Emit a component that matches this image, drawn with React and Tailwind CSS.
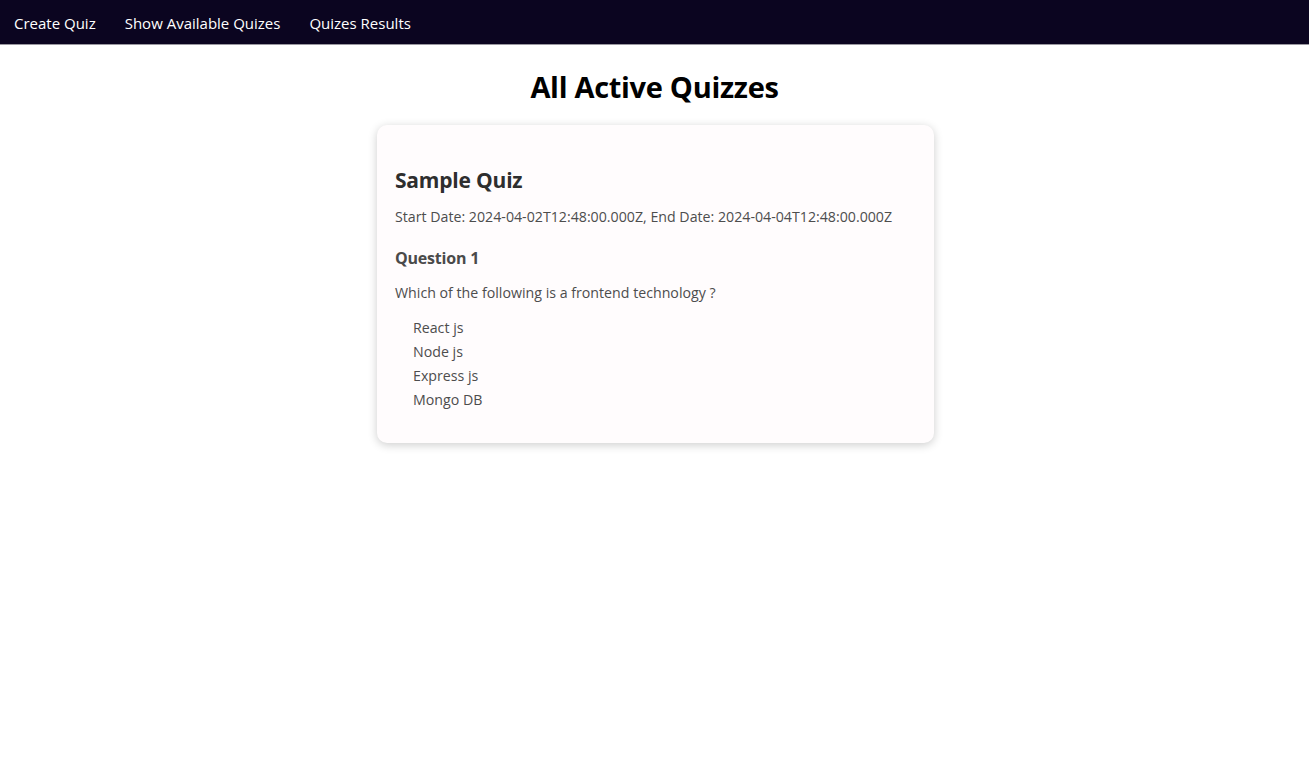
export default function App() {
  return (
    <div className="min-h-[763px] bg-white font-['Open_Sans','Noto_Sans',sans-serif]">
      <nav className="h-[45px] bg-[#0b0520] border-b border-[#9a98a0] flex items-center px-[14px] pt-[3px] gap-[29px] text-[15px] text-white">
        <a>Create Quiz</a>
        <a>Show Available Quizes</a>
        <a>Quizes Results</a>
      </nav>
      <h1 className="text-center text-[29px] font-bold text-black mt-[23px] leading-[38px] tracking-[-0.3px]">All Active Quizzes</h1>
      <div className="flex justify-center mt-[19px]">
        <div className="w-[557px] ml-[2px] bg-[#fffcfd] rounded-[10px] shadow-[0_2px_10px_rgba(0,0,0,0.2)] pl-[18px] pr-[18px] pt-[41px] pb-[31px]">
          <h2 className="text-[21px] font-bold text-[#2e2e2e] leading-[28px] tracking-[-0.2px]">Sample Quiz</h2>
          <p className="text-[14.2px] text-[#4d4d4d] mt-[13px] leading-[20px]">Start Date: 2024-04-02T12:48:00.000Z, End Date: 2024-04-04T12:48:00.000Z</p>
          <h3 className="text-[16px] font-bold text-[#4a4a4a] mt-[20px] leading-[22px] tracking-[-0.2px]">Question 1</h3>
          <p className="text-[14.2px] text-[#4d4d4d] mt-[14px] leading-[20px]">Which of the following is a frontend technology ?</p>
          <ul className="mt-[13px] pl-[18px] text-[14.2px] text-[#4d4d4d] leading-[24px]">
            <li>React js</li>
            <li>Node js</li>
            <li>Express js</li>
            <li>Mongo DB</li>
          </ul>
        </div>
      </div>
    </div>
  );
}
